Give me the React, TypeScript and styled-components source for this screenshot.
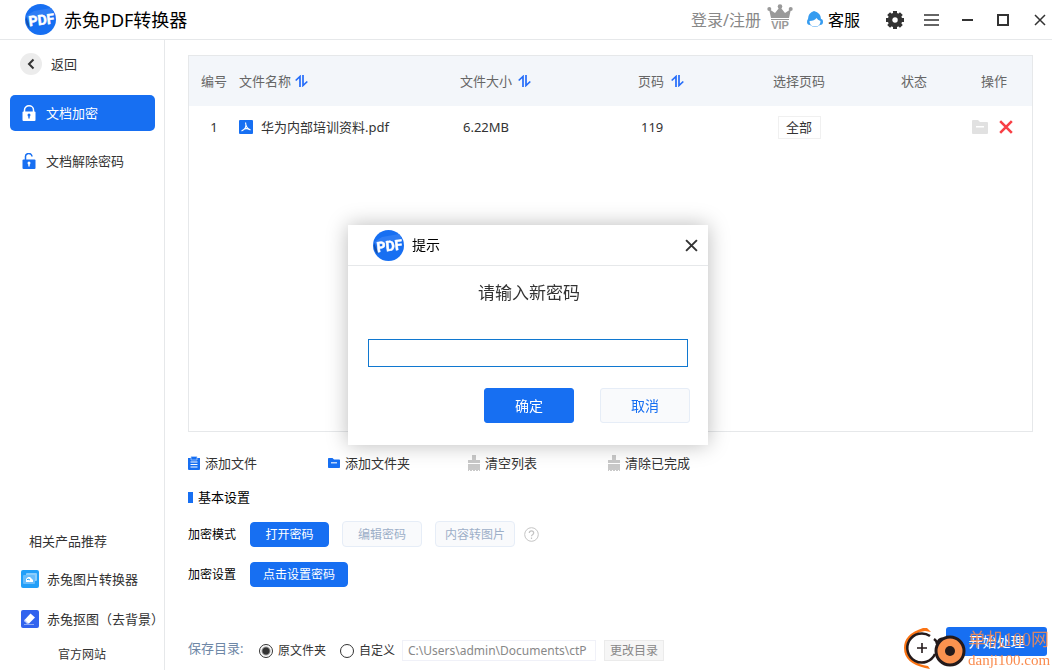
import React from "react";
import styled, { createGlobalStyle, css } from "styled-components";

const blue = "#176ff2";
const line = "#e6e8ea";

const GlobalStyle = createGlobalStyle`
  *, *::before, *::after { box-sizing: border-box; }
  body {
    margin: 0;
    background: #fff;
    color: #333;
    font: 13px/20px "Noto Sans", "Noto Sans CJK SC", sans-serif;
  }
  button, input { font: inherit; color: inherit; margin: 0; }
  button { padding: 0; border: 0; background: none; cursor: pointer; white-space: nowrap; }
  a { color: inherit; text-decoration: none; }
  svg { display: block; flex: none; }
`;

const Page = styled.div`
  display: flex;
  flex-direction: column;
  min-height: 100vh;
`;

const TitleBar = styled.header`
  display: flex;
  align-items: center;
  justify-content: space-between;
  height: 40px;
  padding-left: 25px;
  border-bottom: 1px solid ${line};
`;

const Brand = styled.div`
  display: flex;
  align-items: center;
  gap: 8px;
`;

const AppName = styled.h1`
  margin: 0;
  color: #000;
  font-size: 18px;
  font-weight: 400;
  line-height: 24px;
`;

const Actions = styled.div`
  display: flex;
  align-items: center;
`;

const LoginButton = styled.button`
  display: flex;
  align-items: center;
  gap: 6px;
  height: 32px;
  margin-right: 14px;
  color: #888;
  font-size: 16px;
`;

const CrownBox = styled.span`
  padding-bottom: 6px;
`;

const SupportButton = styled.button`
  display: flex;
  align-items: center;
  gap: 5px;
  margin-right: 17px;
  color: #000;
  font-size: 16px;
`;

const WindowButton = styled.button`
  display: flex;
  align-items: center;
  justify-content: center;
  width: 36px;
  height: 36px;

  &:last-child {
    width: 31px;
    padding-left: 6px;
  }
`;

const Body = styled.div`
  display: flex;
  flex: 1;
`;

const Sidebar = styled.aside`
  display: flex;
  flex-direction: column;
  flex: none;
  width: 165px;
  padding: 13px 0 5px;
  border-right: 1px solid ${line};
`;

const BackButton = styled.button`
  display: flex;
  align-items: center;
  gap: 9px;
  height: 22px;
  margin: 0 20px 20px;
`;

const BackCircle = styled.span`
  display: grid;
  place-items: center;
  width: 22px;
  height: 22px;
  border-radius: 50%;
  background: #ececec;
`;

const NavButton = styled.button<{ $active?: boolean }>`
  display: flex;
  align-items: center;
  gap: 10px;
  height: 36px;
  margin: 0 9px 12px 10px;
  padding-left: 12px;
  border-radius: 5px;
  ${(p) => p.$active && css`background: ${blue}; color: #fff;`}
`;

const Related = styled.section`
  display: flex;
  flex-direction: column;
  margin-top: auto;
`;

const RelatedTitle = styled.h2`
  margin: 0 0 8px 29px;
  font-size: 13px;
  font-weight: 400;
`;

const ProductLink = styled.a`
  display: flex;
  align-items: center;
  gap: 8px;
  height: 40px;
  padding-left: 21px;
  white-space: nowrap;
`;

const SiteLink = styled.a`
  margin-top: 6px;
  text-align: center;
  font-size: 12px;
`;

const Main = styled.main`
  display: flex;
  flex-direction: column;
  flex: 1;
  min-width: 0;
  padding: 15px 5px 9px 23px;
`;

const FilePanel = styled.section`
  flex: 1;
  margin-right: 14px;
  border: 1px solid ${line};
`;

const FileTable = styled.table`
  width: 100%;
  table-layout: fixed;
  border-collapse: collapse;
`;

const HeadCell = styled.th<{ $width?: number; $center?: boolean }>`
  width: ${(p) => (p.$width ? `${p.$width}px` : "auto")};
  height: 50px;
  padding: 0;
  background: #f3f6fa;
  color: #666;
  font-weight: 400;
  text-align: ${(p) => (p.$center ? "center" : "left")};

  &:last-child { padding-right: 14px; }
`;

const Cell = styled.td<{ $center?: boolean; $inset?: boolean }>`
  height: 42px;
  padding: 0 0 0 ${(p) => (p.$inset ? 3 : 0)}px;
  text-align: ${(p) => (p.$center ? "center" : "left")};
`;

const SortButton = styled.button<{ $gap: number }>`
  display: flex;
  align-items: center;
  gap: ${(p) => p.$gap}px;
`;

const FileName = styled.div`
  display: flex;
  align-items: center;
  gap: 8px;
`;

const RangeButton = styled.button`
  width: 43px;
  height: 23px;
  border: 1px solid #f0f0f0;
`;

const RowActions = styled.div`
  display: flex;
  align-items: center;
  gap: 11px;
  padding-left: 2px;
`;

const Toolbar = styled.div`
  display: flex;
  margin-top: 18px;
`;

const ToolButton = styled.button`
  display: flex;
  align-items: center;
  gap: 5px;
  width: 140px;
  height: 26px;
`;

const SectionTitle = styled.h2`
  display: flex;
  align-items: center;
  gap: 5px;
  margin: 11px 0 0;
  color: #000;
  font-size: 13px;
  font-weight: 400;

  &::before {
    content: "";
    width: 5px;
    height: 11px;
    background: ${blue};
  }
`;

const SettingRow = styled.div`
  display: flex;
  align-items: center;
  height: 26px;
  margin-top: 14px;
  color: #000;
  font-size: 12px;
`;

const SettingLabel = styled.span`
  width: 62px;
  padding-top: 2px;
`;

const OptionButton = styled.button<{ $width: number; $primary?: boolean }>`
  width: ${(p) => p.$width}px;
  height: 26px;
  margin-right: 13px;
  padding-top: 2px;
  border: 1px solid #e6edf7;
  border-radius: 4px;
  background: #f9fafc;
  color: #9dafc8;
  ${(p) => p.$primary && css`
    height: 25px;
    border-color: ${blue};
    background: ${blue};
    color: #fff;
  `}
`;

const HelpButton = styled.button`
  margin-left: -4px;
`;

const Footer = styled.footer`
  display: flex;
  justify-content: space-between;
  align-items: flex-start;
  margin-top: 40px;
`;

const SavePath = styled.div`
  display: flex;
  align-items: center;
  height: 21px;
  margin-top: 13px;
  font-size: 12px;
`;

const SaveLabel = styled.span`
  width: 71px;
  padding-bottom: 6px;
  color: #6e87a6;
  font-size: 13px;
`;

const RadioLabel = styled.label`
  display: flex;
  align-items: center;
  gap: 5px;
  margin-right: 14px;
`;

const Radio = styled.input`
  appearance: none;
  width: 14px;
  height: 14px;
  border: 1px solid #333;
  border-radius: 50%;
  background: #fff;

  &:checked { background: radial-gradient(circle, #333 0 3px, #fff 5px); }
`;

const PathInput = styled.input`
  width: 194px;
  height: 21px;
  margin-left: -7px;
  padding: 0 5px;
  border: 1px solid #f0f1f8;
  color: #888;
`;

const ChangeButton = styled.button`
  width: 60px;
  height: 21px;
  margin-left: 8px;
  border: 1px solid #ebebeb;
  background: #f6f6f6;
  color: #888;
`;

const StartButton = styled.button`
  width: 101px;
  height: 29px;
  border-radius: 3px;
  background: ${blue};
  color: #fff;
  font-size: 14px;
`;

const Overlay = styled.div`
  position: fixed;
  inset: 0;
  display: flex;
  align-items: center;
  justify-content: center;
  padding-left: 4px;
`;

const Dialog = styled.div`
  width: 360px;
  height: 220px;
  background: #fff;
  box-shadow: 0 0 20px rgba(0, 0, 0, 0.27);
`;

const DialogHeader = styled.div`
  display: flex;
  align-items: center;
  gap: 8px;
  height: 41px;
  padding: 0 10px 0 25px;
  border-bottom: 1px solid ${line};
  color: #000;
  font-size: 14px;
`;

const CloseButton = styled.button`
  margin-left: auto;
`;

const DialogForm = styled.form`
  display: flex;
  flex-direction: column;
  padding: 15px 18px 0 20px;
`;

const Prompt = styled.label`
  text-align: center;
  font-size: 17px;
  line-height: 24px;
`;

const PasswordInput = styled.input`
  width: 320px;
  height: 28px;
  margin-top: 34px;
  padding: 0 6px;
  border: 1px solid #1078d0;
  border-radius: 0;
  outline: none;
`;

const DialogButtons = styled.div`
  display: flex;
  justify-content: flex-end;
  gap: 26px;
  margin-top: 21px;
`;

const DialogButton = styled.button<{ $primary?: boolean }>`
  width: 90px;
  height: 35px;
  border: 1px solid ${(p) => (p.$primary ? blue : "#e6edf7")};
  border-radius: 3px;
  background: ${(p) => (p.$primary ? blue : "#f9fafc")};
  color: ${(p) => (p.$primary ? "#fff" : blue)};
  font-size: 14px;
`;

const Watermark = styled.div`
  position: fixed;
  right: 3px;
  bottom: 0;
  display: flex;
  align-items: flex-end;
  gap: 2px;
  color: #fa8c4f;
  pointer-events: none;
`;

const WatermarkText = styled.div`
  display: flex;
  flex-direction: column;
  width: 81px;
  font-family: "Liberation Serif", "Noto Sans CJK SC", serif;
  font-size: 15px;
  line-height: 20px;
  white-space: nowrap;
`;

const WatermarkName = styled.span`
  font-size: 18px;
  opacity: 0.85;
`;

const Logo = () => (
  <svg width="31" height="31" viewBox="0 0 31 31" aria-hidden="true">
    <circle cx="15.500" cy="15.500" r="15.500" fill={blue} />
    <path d="M1 12 9 7l17-3 3 4-25 8z" fill="#2f7df4" />
    <path d="M1 13l4 9-1 2q-4-5-3-11z" fill="#1550ad" />
    <text x="16.500" y="21" textAnchor="middle" transform="rotate(-7 15 16)" fill="#fff" stroke="#fff" strokeWidth="0.500" fontFamily="Roboto, sans-serif" fontWeight="700" fontSize="14">PDF</text>
  </svg>
);

const Crown = () => (
  <svg width="26" height="26" viewBox="0 0 26 26" fill="#999" aria-hidden="true">
    <path d="M2 5l6 4 4-5h2l4 5 6-4-2 9H4z" />
    <circle cx="13" cy="2.500" r="2.300" /><circle cx="2.300" cy="5" r="2" /><circle cx="23.700" cy="5" r="2" />
    <path d="M4 15h18v1H4z" />
    <text x="13" y="25" textAnchor="middle" fontFamily="Liberation Sans, sans-serif" fontWeight="700" fontSize="11">VIP</text>
  </svg>
);

const Support = () => (
  <svg width="16" height="17" viewBox="0 0 16 17" aria-hidden="true">
    <path d="M7 0q7 2 7 8 2 0 2 3t-3 3q-5 4-10 0-3 0-3-3 0-2 1-3 0-6 6-8z" fill="#369cf0" />
    <path d="M2.500 10q5 0 7-3 1 2 4 3 0 5.500-5.500 5.500T2.500 10z" fill="#fff" />
  </svg>
);

const Gear = () => (
  <svg width="18" height="18" viewBox="0 0 18 18" aria-hidden="true">
    <circle cx="9" cy="9" r="5" fill="none" stroke="#333" strokeWidth="4.500" />
    {[0, 45, 90, 135].map((a) => (
      <path key={a} d="M7 0h4v3H7zM7 15h4v3H7z" fill="#333" transform={`rotate(${a} 9 9)`} />
    ))}
  </svg>
);

const Cross = ({ size, color, weight }: { size: number; color: string; weight: number }) => (
  <svg width={size} height={size} viewBox="0 0 12 12" stroke={color} strokeWidth={weight} aria-hidden="true">
    <path d="M1 1l10 10M11 1L1 11" />
  </svg>
);

const Lock = ({ open, color, hole }: { open?: boolean; color: string; hole: string }) => (
  <svg width="14" height="16" viewBox="0 0 14 16" aria-hidden="true">
    <path d={open ? "M3.500 7V4a3.200 3.200 0 0 1 6.500-.500" : "M2.500 7V5a4.500 4.200 0 0 1 9 0v2"} fill="none" stroke={color} strokeWidth="1.500" />
    <rect x="0.500" y="6.500" width="13" height="9.500" rx="1" fill={color} />
    <circle cx="7" cy="10" r="1.500" fill={hole} />
    <path d="M6.300 10h1.400v3.500H6.300z" fill={hole} />
  </svg>
);

const Sort = () => (
  <svg width="13" height="12" viewBox="0 0 13 12" fill="none" stroke="#246cf9" strokeWidth="1.700" aria-hidden="true">
    <path d="M5 12V1.500L.700 5.500M8 0v10.500l4.300-4" />
  </svg>
);

const Pdf = () => (
  <svg width="14" height="14" viewBox="0 0 14 14" aria-hidden="true">
    <rect width="14" height="14" rx="1" fill={blue} />
    <path d="M6.500 2.500q1 3 0 5T2.500 11M5.500 9q3-1 6 1M7 5q.500 2.500 3 4.500" fill="none" stroke="#fff" strokeWidth="1.100" />
  </svg>
);

const Folder = ({ width, height, color }: { width: number; height: number; color: string }) => (
  <svg width={width} height={height} viewBox="0 0 16 14" preserveAspectRatio="none" aria-hidden="true">
    <path d="M0 1q0-1 1-1h5l2 2h7q1 0 1 1v10q0 1-1 1H1q-1 0-1-1z" fill={color} />
    <path d="M4 6h8v1.500H4z" fill="#fff" />
  </svg>
);

const Clipboard = () => (
  <svg width="12" height="14" viewBox="0 0 12 14" aria-hidden="true">
    <path d="M0 2h12v11q0 1-1 1H1q-1 0-1-1z" fill={blue} />
    <path d="M3 .500h6V4H3z" fill={blue} stroke="#b9d4fc" strokeWidth="0.700" />
    <path d="M2.500 6h7M2.500 8.500h7M2.500 11h7" stroke="#fff" />
  </svg>
);

const Broom = () => (
  <svg width="12" height="16" viewBox="0 0 12 16" fill="#c9c9c9" aria-hidden="true">
    <path d="M4 0h4v5h4v3H0V5h4zM0 9h12v7h-1v-1h-1v1H8v-1H7v1H5v-1H4v1H2v-1H1v1H0z" />
  </svg>
);

const Help = () => (
  <svg width="15" height="15" viewBox="0 0 15 15" fill="none" stroke="#c4c4c4" aria-hidden="true">
    <circle cx="7.500" cy="7.500" r="6.800" />
    <path d="M5.300 6q0-2.200 2.200-2.200T9.700 6q0 1-1.200 1.700-1 .600-1 1.600M7.500 10.500V12" strokeWidth="1.200" />
  </svg>
);

const PictureApp = () => (
  <svg width="18" height="18" viewBox="0 0 18 18" aria-hidden="true">
    <rect width="18" height="18" rx="2" fill="#239ff8" />
    <rect x="5" y="3" width="11" height="8" rx="1" fill="#8bcdfc" />
    <rect x="2" y="5" width="12" height="9" rx="1" fill="#68bcfb" />
    <path d="M5 12V9l2-2h2l3 3v2z" fill="#fff" />
    <path d="M6 10l1-1 2 1" fill="none" stroke="#239ff8" />
  </svg>
);

const CutoutApp = () => (
  <svg width="18" height="18" viewBox="0 0 18 18" aria-hidden="true">
    <rect width="18" height="18" rx="2" fill="#3163ee" />
    <path d="M9.500 3.500l4.500 4-6 6H6l-2.500-2.500v-1z" fill="#fff" />
    <path d="M3.500 9.500L7 13l-1 .800-2.500-2.500z" fill="#b5c8fb" />
    <path d="M3 14.500h10" stroke="#8daaf7" />
  </svg>
);

const WatermarkLogo = () => (
  <svg width="63" height="43" viewBox="0 0 63 43" aria-hidden="true">
    <path d="M20 1Q1 7 1 21q0 15 21 20l5 1-2-3Q8 37 6 23 4 10 17 5l5-1 6 1-4-4z" fill="#fb7414" />
    <circle cx="19" cy="21" r="14.500" fill="#fff" />
    <path d="M27 9A14.500 14.500 0 1 0 32 27" fill="none" stroke="#241a1b" strokeWidth="2.500" />
    <path d="M14 21h10M19 16v10" stroke="#241a1b" strokeWidth="1.600" />
    <path d="M31 12q3 2 3 5 2-6 6-5M43 10l6 1" fill="none" stroke="#241a1b" strokeWidth="2.500" />
    <circle cx="47" cy="24" r="14" fill="#fb924f" stroke="#241a1b" strokeWidth="3" />
    <circle cx="47" cy="24" r="5" fill="#241a1b" />
  </svg>
);

const columns = [
  { title: "编号", width: 50, center: true },
  { title: "文件名称", sortGap: 4 },
  { title: "文件大小", width: 178, sortGap: 6 },
  { title: "页码", width: 102, sortGap: 7 },
  { title: "选择页码", width: 118, center: true },
  { title: "状态", width: 112, center: true },
  { title: "操作", width: 62, center: true },
];

export default function App() {
  return (
    <Page>
      <GlobalStyle />
      <TitleBar>
        <Brand><Logo /><AppName>赤兔PDF转换器</AppName></Brand>
        <Actions>
          <LoginButton>登录/注册<CrownBox><Crown /></CrownBox></LoginButton>
          <SupportButton><Support />客服</SupportButton>
          <WindowButton aria-label="设置"><Gear /></WindowButton>
          <WindowButton aria-label="菜单">
            <svg width="15" height="12" viewBox="0 0 15 12" stroke="#333" strokeWidth="1.500"><path d="M0 1h15M0 6h15M0 11h15" /></svg>
          </WindowButton>
          <WindowButton aria-label="最小化">
            <svg width="11" height="2" viewBox="0 0 11 2"><path d="M0 0h11v2H0z" fill="#333" /></svg>
          </WindowButton>
          <WindowButton aria-label="最大化">
            <svg width="12" height="12" viewBox="0 0 12 12"><path d="M1 1h10v10H1z" fill="none" stroke="#333" strokeWidth="2" /></svg>
          </WindowButton>
          <WindowButton aria-label="关闭"><Cross size={12} color="#333" weight={1.5} /></WindowButton>
        </Actions>
      </TitleBar>

      <Body>
        <Sidebar>
          <BackButton>
            <BackCircle>
              <svg width="8" height="12" viewBox="0 0 8 12" fill="none" stroke="#333" strokeWidth="2"><path d="M6.500 1.500L2 6l4.500 4.500" /></svg>
            </BackCircle>
            返回
          </BackButton>
          <NavButton $active><Lock color="#fff" hole={blue} />文档加密</NavButton>
          <NavButton><Lock open color={blue} hole="#fff" />文档解除密码</NavButton>
          <Related>
            <RelatedTitle>相关产品推荐</RelatedTitle>
            <ProductLink href="#picture"><PictureApp />赤兔图片转换器</ProductLink>
            <ProductLink href="#cutout"><CutoutApp />赤兔抠图（去背景）</ProductLink>
            <SiteLink href="#site">官方网站</SiteLink>
          </Related>
        </Sidebar>

        <Main>
          <FilePanel>
            <FileTable>
              <thead>
                <tr>
                  {columns.map((c) => (
                    <HeadCell key={c.title} $width={c.width} $center={c.center}>
                      {c.sortGap ? <SortButton $gap={c.sortGap}>{c.title}<Sort /></SortButton> : c.title}
                    </HeadCell>
                  ))}
                </tr>
              </thead>
              <tbody>
                <tr>
                  <Cell $center>1</Cell>
                  <Cell><FileName><Pdf />华为内部培训资料.pdf</FileName></Cell>
                  <Cell $inset>6.22MB</Cell>
                  <Cell $inset>119</Cell>
                  <Cell $center><RangeButton>全部</RangeButton></Cell>
                  <Cell />
                  <Cell>
                    <RowActions>
                      <button aria-label="打开文件夹"><Folder width={16} height={14} color="#e1e1e1" /></button>
                      <button aria-label="删除"><Cross size={14} color="#f83f45" weight={2.2} /></button>
                    </RowActions>
                  </Cell>
                </tr>
              </tbody>
            </FileTable>
          </FilePanel>

          <Toolbar>
            <ToolButton><Clipboard />添加文件</ToolButton>
            <ToolButton><Folder width={12} height={10} color={blue} />添加文件夹</ToolButton>
            <ToolButton><Broom />清空列表</ToolButton>
            <ToolButton><Broom />清除已完成</ToolButton>
          </Toolbar>

          <SectionTitle>基本设置</SectionTitle>
          <SettingRow>
            <SettingLabel>加密模式</SettingLabel>
            <OptionButton $width={79} $primary>打开密码</OptionButton>
            <OptionButton $width={80}>编辑密码</OptionButton>
            <OptionButton $width={80}>内容转图片</OptionButton>
            <HelpButton aria-label="帮助"><Help /></HelpButton>
          </SettingRow>
          <SettingRow>
            <SettingLabel>加密设置</SettingLabel>
            <OptionButton $width={98} $primary>点击设置密码</OptionButton>
          </SettingRow>

          <Footer>
            <SavePath>
              <SaveLabel>保存目录:</SaveLabel>
              <RadioLabel><Radio type="radio" name="target" defaultChecked />原文件夹</RadioLabel>
              <RadioLabel><Radio type="radio" name="target" />自定义</RadioLabel>
              <PathInput aria-label="保存目录" readOnly value="C:\Users\admin\Documents\ctP" />
              <ChangeButton>更改目录</ChangeButton>
            </SavePath>
            <StartButton>开始处理</StartButton>
          </Footer>
        </Main>
      </Body>

      <Watermark>
        <WatermarkLogo />
        <WatermarkText>
          <WatermarkName>单机100网</WatermarkName>
          <span>danji100.com</span>
        </WatermarkText>
      </Watermark>

      <Overlay>
        <Dialog role="dialog" aria-labelledby="dialog-title">
          <DialogHeader>
            <Logo />
            <span id="dialog-title">提示</span>
            <CloseButton aria-label="关闭"><Cross size={13} color="#333" weight={1.8} /></CloseButton>
          </DialogHeader>
          <DialogForm onSubmit={(e: React.FormEvent) => e.preventDefault()}>
            <Prompt htmlFor="password">请输入新密码</Prompt>
            <PasswordInput id="password" type="password" />
            <DialogButtons>
              <DialogButton $primary type="submit">确定</DialogButton>
              <DialogButton type="button">取消</DialogButton>
            </DialogButtons>
          </DialogForm>
        </Dialog>
      </Overlay>
    </Page>
  );
}
